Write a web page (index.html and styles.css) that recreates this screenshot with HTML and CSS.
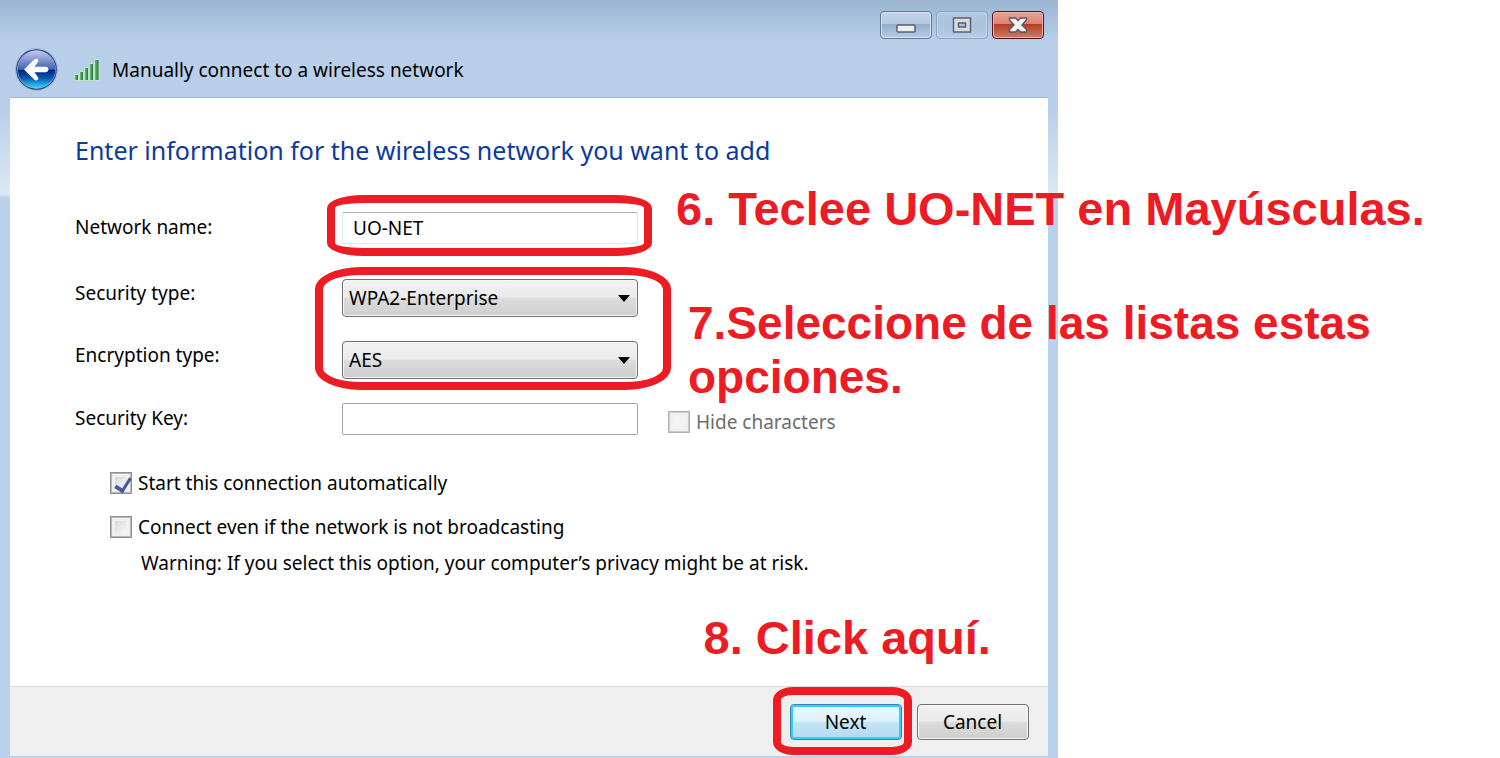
FILE: index.html
```
<!DOCTYPE html>
<html lang="es">
<head>
  <meta charset="UTF-8" />
  <title>Manually connect to a wireless network</title>
  <link rel="stylesheet" href="styles.css">
</head>
<body>
  <div class="window" lang="en">
    <header class="titlebar">
      <div class="window-buttons">
        <button class="win-btn win-btn-min" type="button" aria-label="Minimize">
          <svg width="20" height="10" viewBox="0 0 20 10"><rect x="1" y="1" width="18" height="7" rx="1" fill="#eee" stroke="#5b6072" stroke-width="1.5"/></svg>
        </button>
        <button class="win-btn win-btn-off" type="button" aria-label="Maximize">
          <svg width="20" height="16" viewBox="0 0 20 16"><path fill="#dcdcdc" fill-rule="evenodd" stroke="#5b6072" stroke-width="1.5" d="M1.5 1h17v14h-17zM6.500 6h7v4h-7z"/></svg>
        </button>
        <button class="win-btn win-btn-close" type="button" aria-label="Close">
          <svg width="20" height="16" viewBox="0 0 20 16"><path fill="#f2f2f2" stroke="#5b5566" stroke-width="1.4" stroke-linejoin="round" d="M1.500 1h6l2.500 2.500 2.500-2.500h6v2l-4.500 5 4.500 4.500v2.500h-6l-2.500-2.500-2.500 2.500h-6v-2.500l4.500-4.500-4.500-5z"/></svg>
        </button>
      </div>
      <div class="title-row">
        <button class="back" type="button" aria-label="Back">
          <svg width="44" height="44" viewBox="0 0 44 44">
            <defs>
              <linearGradient id="orbTop" x1="0" y1="0" x2="0" y2="1">
                <stop offset="0" stop-color="#c9c8ea"/>
                <stop offset="1" stop-color="#3a63b4"/>
              </linearGradient>
              <linearGradient id="orbBottom" x1="0" y1="0" x2="0" y2="1">
                <stop offset="0" stop-color="#03207a"/>
                <stop offset="0.450" stop-color="#0a55ae"/>
                <stop offset="1" stop-color="#35dcf8"/>
              </linearGradient>
            </defs>
            <circle cx="21.500" cy="21.500" r="21.500" fill="#8fa5c4" opacity="0.6"/>
            <circle cx="21.500" cy="21.500" r="20.300" fill="#21407f"/>
            <circle cx="21.500" cy="21.500" r="19.300" fill="#8ba9dc"/>
            <path d="M2.800 21.500a18.700 18.700 0 0 1 37.400 0z" fill="url(#orbTop)"/>
            <path d="M2.800 21.500a18.700 18.700 0 0 0 37.400 0z" fill="url(#orbBottom)"/>
            <path d="M9 21.500L19.500 11.300q3.500-1.800 4 1.800L19.500 18.800H31q2.500.3 2.500 2.700t-2.500 2.700H19.500L23.500 30q-.5 3.600-4 1.800z" fill="#fff"/>
          </svg>
        </button>
        <svg class="signal" width="26" height="24" viewBox="0 0 26 24">
          <defs>
            <linearGradient id="bar" x1="0" y1="0" x2="1" y2="0">
              <stop offset="0" stop-color="#7fc48d"/>
              <stop offset="1" stop-color="#156b2e"/>
            </linearGradient>
          </defs>
          <g fill="url(#bar)" stroke="#b5e6c4" stroke-width="1">
            <rect x="0.500" y="16.500" width="4" height="6"/>
            <rect x="5.500" y="13.500" width="4" height="9"/>
            <rect x="10.500" y="9.500" width="4" height="13"/>
            <rect x="15.500" y="5.500" width="4" height="17"/>
            <rect x="20.500" y="1.500" width="4.500" height="21"/>
          </g>
        </svg>
        <span class="title">Manually connect to a wireless network</span>
      </div>
    </header>

    <form class="panel">
      <main class="content">
        <h1>Enter information for the wireless network you want to add</h1>

        <div class="field">
          <label for="netName">Network name:</label>
          <div class="marked ring-name">
            <input class="text active" id="netName" type="text" value="UO-NET">
            <p class="note note-name" lang="es">6. Teclee UO-NET en Mayúsculas.</p>
          </div>
        </div>

        <div class="security">
          <div class="labels">
            <label for="secType">Security type:</label>
            <label for="encType">Encryption type:</label>
          </div>
          <div class="marked ring-lists">
            <div class="combo">
              <select id="secType"><option>WPA2-Enterprise</option></select>
            </div>
            <div class="combo">
              <select id="encType"><option>AES</option></select>
            </div>
            <p class="note note-lists" lang="es">7.Seleccione de las listas estas<br>opciones.</p>
          </div>
        </div>

        <div class="field">
          <label for="secKey">Security Key:</label>
          <input class="text" id="secKey" type="text">
          <div class="check hide-chars">
            <input type="checkbox" id="hideChars" disabled>
            <label for="hideChars">Hide characters</label>
          </div>
        </div>

        <div class="options">
          <div class="check">
            <input type="checkbox" id="autoStart" checked>
            <label for="autoStart">Start this connection automatically</label>
          </div>
          <div class="check">
            <input type="checkbox" id="hiddenNet">
            <label for="hiddenNet">Connect even if the network is not broadcasting</label>
          </div>
          <p class="warning">Warning: If you select this option, your computer’s privacy might be at risk.</p>
        </div>
      </main>

      <footer class="footer">
        <div class="marked ring-next">
          <button class="btn btn-default" type="button">Next</button>
          <p class="note note-next" lang="es">8. Click aquí.</p>
        </div>
        <button class="btn" type="button">Cancel</button>
      </footer>
    </form>
  </div>
</body>
</html>
```
FILE: styles.css
```
* { box-sizing: border-box; }
body {
  margin: 0; background: #fff; color: #000;
  font-family: "Noto Sans", "Open Sans", sans-serif; font-size: 19px; line-height: 28px;
  overflow-x: hidden;
}
h1, p { margin: 0; }
button, input, select { font: inherit; color: inherit; }

/* window frame */
.window {
  width: 70.5%; min-width: 900px; min-height: 100vh; padding: 0 10px 2px;
  display: flex; flex-direction: column;
  background: linear-gradient(#9ab4d1 0, #b9d0e9 42px, #b9cfe9 110px, #dce9f5 194px, #b9d1ea 198px);
}
.titlebar { height: 98px; padding: 11px 4px 0 5px; border-bottom: 1px solid #a3b9d3; }
.window-buttons { display: flex; justify-content: flex-end; gap: 4px; }
.win-btn {
  width: 52px; height: 28px; padding: 0;
  display: flex; align-items: center; justify-content: center;
  border: 1px solid #63779a; border-radius: 4px;
  background: linear-gradient(#c3d4e8 0, #b5c9e0 46%, #94aecb 48%, #b5cde6 100%);
  box-shadow: inset 0 0 0 1px #d6e4f3;
}
.win-btn-min { padding-top: 7px; }
.win-btn-off {
  border-color: #8fa6c3;
  background: linear-gradient(#b3c8e0 0, #abc3dd 50%, #b7cde7 100%);
  box-shadow: inset 0 0 0 1px #c2d5ea;
}
.win-btn-close {
  border-color: #4e1420;
  background: linear-gradient(#e8a396 0, #d98373 46%, #b63d24 48%, #d07a66 100%);
  box-shadow: inset 0 0 0 1px #edb3a8;
}
.title-row { display: flex; align-items: center; margin-top: 9px; }
.back { width: 44px; height: 44px; padding: 0; border: 0; background: none; }
.back svg, .signal { display: block; }
.signal { margin: 0 12px 0 15px; }

/* page */
.panel { flex: 1; display: flex; flex-direction: column; background: #fff; }
.content { flex: 1; padding: 36px 19px 0 65px; }
h1 { font-size: 25px; line-height: 32px; font-weight: 400; color: #0b3a9e; margin-bottom: 46px; }
.field, .security { display: flex; align-items: flex-start; }
.field > label, .labels { width: 267px; flex: none; }
.field > label { padding-top: 1px; }
.labels { display: flex; flex-direction: column; gap: 34px; }
.security { margin: 35px 0 24px; }
.text {
  display: block; width: 296px; height: 32px; padding: 0 10px;
  border: 1px solid #a4a4a4; border-radius: 2px; background: #fff;
}
.text.active { border-color: #a9adb8 #dfe5ee #e3e9ef; }
.combo { position: relative; }
.combo + .combo { margin-top: 24px; }
.combo select {
  display: block; width: 296px; height: 38px; padding: 0 6px;
  appearance: none; border: 1px solid #707070; border-radius: 4px;
  background: linear-gradient(#f2f2f2 0, #ebebeb 48%, #dcdcdc 50%, #cfcfcf 100%);
  box-shadow: inset 0 0 0 1px #f6f6f6;
}
.combo::after {
  content: ""; position: absolute; right: 8px; top: 16px;
  border: 6px solid transparent; border-top: 7px solid #000; border-bottom: 0;
  pointer-events: none;
}

/* check boxes */
.check { display: flex; align-items: center; gap: 6px; }
.check input {
  appearance: none; position: relative; flex: none; width: 22px; height: 22px; margin: 0;
  border: 1px solid #8e8f8f; outline: 1px solid #b8b8b8; outline-offset: -2px;
  background: linear-gradient(135deg, #c9ced6, #f6f6f6 75%);
  box-shadow: inset 0 0 0 4px #f0f0f0;
}
.check input:checked::after {
  content: ""; position: absolute; left: 7px; top: 2px; width: 7px; height: 13px;
  border: solid #42599c; border-width: 0 3px 4px 0; transform: rotate(32deg);
}
.check input:disabled { border-color: #b1b1b1; outline-color: #ccc; background: #f3f3f3; }
.check input:disabled + label { color: #6d6d6d; }
.hide-chars { margin: 5px 0 0 30px; }
.options { padding-left: 35px; margin-top: 33px; display: flex; flex-direction: column; gap: 16px; }
.warning { padding-left: 31px; margin-top: -8px; }

/* footer */
.footer {
  display: flex; justify-content: flex-end; gap: 15px; padding: 17px 19px 16px;
  background: #efefef; border-top: 1px solid #dcdcdc;
}
.btn {
  display: block; width: 112px; height: 36px; padding: 0;
  border: 1px solid #707070; border-radius: 4px;
  background: linear-gradient(#f2f2f2 0, #ebebeb 48%, #dcdcdc 50%, #cfcfcf 100%);
  box-shadow: inset 0 0 0 1px #f8f8f8;
}
.btn-default {
  border-color: #3c7fb1;
  background: linear-gradient(#ebf6fc 0, #dff1fb 48%, #c4e5f6 50%, #b2daf2 100%);
  box-shadow: inset 0 0 0 2px #2fd0fa;
}

/* red marks and steps drawn over the window */
.marked { position: relative; flex: none; }
.marked::before {
  content: ""; position: absolute; z-index: 1;
  border: 8px solid #ed1c24; pointer-events: none;
}
.ring-name::before { inset: -17px -14px -12px -15px; border-radius: 36px / 13px; }
.ring-lists::before { inset: -12px -33px -11px -27px; border-radius: 46px / 22px; }
.ring-next::before { inset: -17px -10px -15px -17px; border-radius: 20px / 13px; }
.note {
  position: absolute; z-index: 2; white-space: nowrap; color: #ed1c24;
  font: bold 47px/54px "Liberation Sans", Arial, sans-serif;
}
.note-name { left: 334px; top: -30px; }
.note-lists { left: 346px; top: 17px; font-size: 46px; }
.note-next { left: -86px; top: -93px; }
```
